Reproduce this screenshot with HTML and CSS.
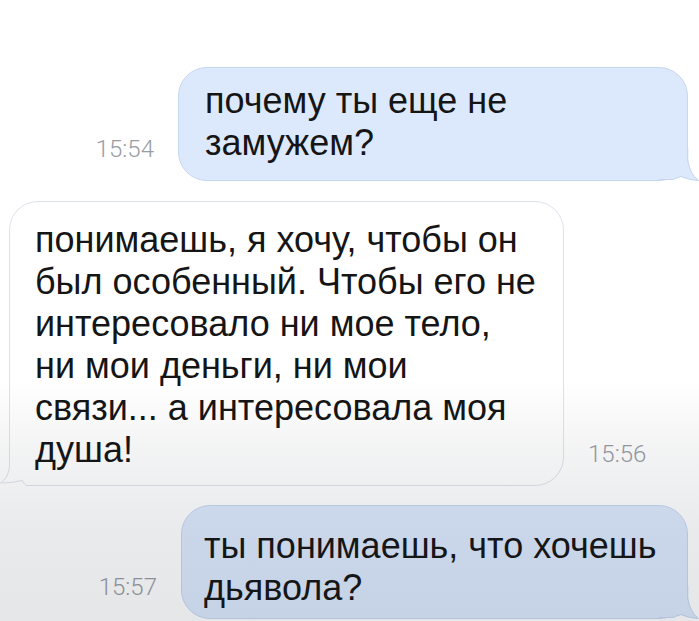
FILE: index.html
```html
<!DOCTYPE html>
<html lang="ru">
<head>
<meta charset="utf-8">
<title>Переписка</title>
<link rel="stylesheet" href="styles.css">
</head>
<body>
<div class="chat">
  <div class="row row-out first">
    <span class="time">15:54</span>
    <div class="bubble bubble-out w1"><span class="txt">почему ты еще не<br>замужем?</span><svg class="tail tail-out" width="40" height="33" viewBox="0 0 40 33"><path class="tf" d="M0,32 L14,32 Q18,30 22,29 Q30,32.5 40,33 Q31,26 29.5,12 L29.5,0 L0,0 Z"/><path class="ts" d="M0,31.5 L14,31.5 Q18,29.5 22,28.5 Q30,32 39.5,32.5 Q31,26 28.5,12 L28.5,0"/></svg></div>
  </div>
  <div class="row row-in">
    <div class="bubble bubble-in"><span class="txt">понимаешь, я хочу, чтобы он<br>был особенный. Чтобы его не<br>интересовало ни мое тело,<br>ни мои деньги, ни мои<br>связи... а интересовала моя<br>душа!</span><svg class="tail tail-in" width="40" height="33" viewBox="0 0 40 33"><path class="tf" d="M40,32 L26,32 Q24,30.5 22,27 Q12,29.5 0.5,29.5 Q8,25 9.5,14 L9.5,0 L40,0 Z"/><path class="ts" d="M40,32.5 L26,32.5 Q24,31 22,27.5 Q12,30 0.5,30 Q8,25.5 9.5,14 L9.5,0"/></svg></div>
    <span class="time">15:56</span>
  </div>
  <div class="row row-out last">
    <span class="time">15:57</span>
    <div class="bubble bubble-out w3"><span class="txt">ты понимаешь, что хочешь<br>дьявола?</span><svg class="tail tail-out" width="40" height="33" viewBox="0 0 40 33"><path class="tf" d="M0,32 L14,32 Q18,30 22,29 Q30,32.5 40,33 Q31,26 29.5,12 L29.5,0 L0,0 Z"/><path class="ts" d="M0,31.5 L14,31.5 Q18,29.5 22,28.5 Q30,32 39.5,32.5 Q31,26 28.5,12 L28.5,0"/></svg></div>
  </div>
</div>
<div class="shade"></div>
</body>
</html>
```
FILE: styles.css
```css
html, body {
  margin: 0;
  padding: 0;
  background: #ffffff;
}
body {
  width: 699px;
  height: 621px;
  overflow: hidden;
  position: relative;
  font-family: "Liberation Sans", Arial, sans-serif;
}
.chat {
  display: flex;
  flex-direction: column;
  padding-top: 67px;
}
.row {
  display: flex;
  align-items: flex-end;
  gap: 24px;
}
.row-out {
  justify-content: flex-end;
  padding-right: 11px;
}
.row-in {
  justify-content: flex-start;
  padding-left: 9px;
  margin-top: 20px;
}
.row-out.last {
  margin-top: 19px;
}
.time {
  font-family: Roboto, "Liberation Sans", sans-serif;
  font-weight: 300;
  font-size: 24px;
  line-height: 24px;
  color: #989ca4;
  padding-bottom: 20px;
}
.bubble {
  position: relative;
  box-sizing: border-box;
  font-size: 36px;
  line-height: 42px;
  color: #151515;
  border-radius: 29px;
  white-space: nowrap;
}
.txt {
  position: relative;
  z-index: 1;
}
.bubble-out {
  background: #dce9fc;
  border: 1px solid #c7d7f0;
}
.w1 {
  width: 510px;
  padding: 12px 18px 16px 26px;
}
.w3 {
  width: 507px;
  padding: 19px 18px 9px 22px;
}
.bubble-in {
  width: 555px;
  background: #ffffff;
  border: 1px solid #dde3ec;
  padding: 17px 18px 14px 25px;
}
.tail {
  position: absolute;
  bottom: -1px;
  overflow: visible;
  z-index: 0;
}
.tail-out {
  right: -12px;
}
.tail-in {
  left: -10px;
}
.bubble-out .tf { fill: #dce9fc; }
.bubble-out .ts { fill: none; stroke: #c7d7f0; stroke-width: 1; }
.bubble-in .tf { fill: #ffffff; }
.bubble-in .ts { fill: none; stroke: #dde3ec; stroke-width: 1; }
.shade {
  position: absolute;
  left: 0;
  top: 0;
  width: 699px;
  height: 621px;
  pointer-events: none;
  z-index: 2;
  background: linear-gradient(to bottom,
    rgba(20, 28, 45, 0) 0px,
    rgba(20, 28, 45, 0) 380px,
    rgba(20, 28, 45, 0.05) 450px,
    rgba(20, 28, 45, 0.09) 530px,
    rgba(20, 28, 45, 0.11) 621px);
}
```
